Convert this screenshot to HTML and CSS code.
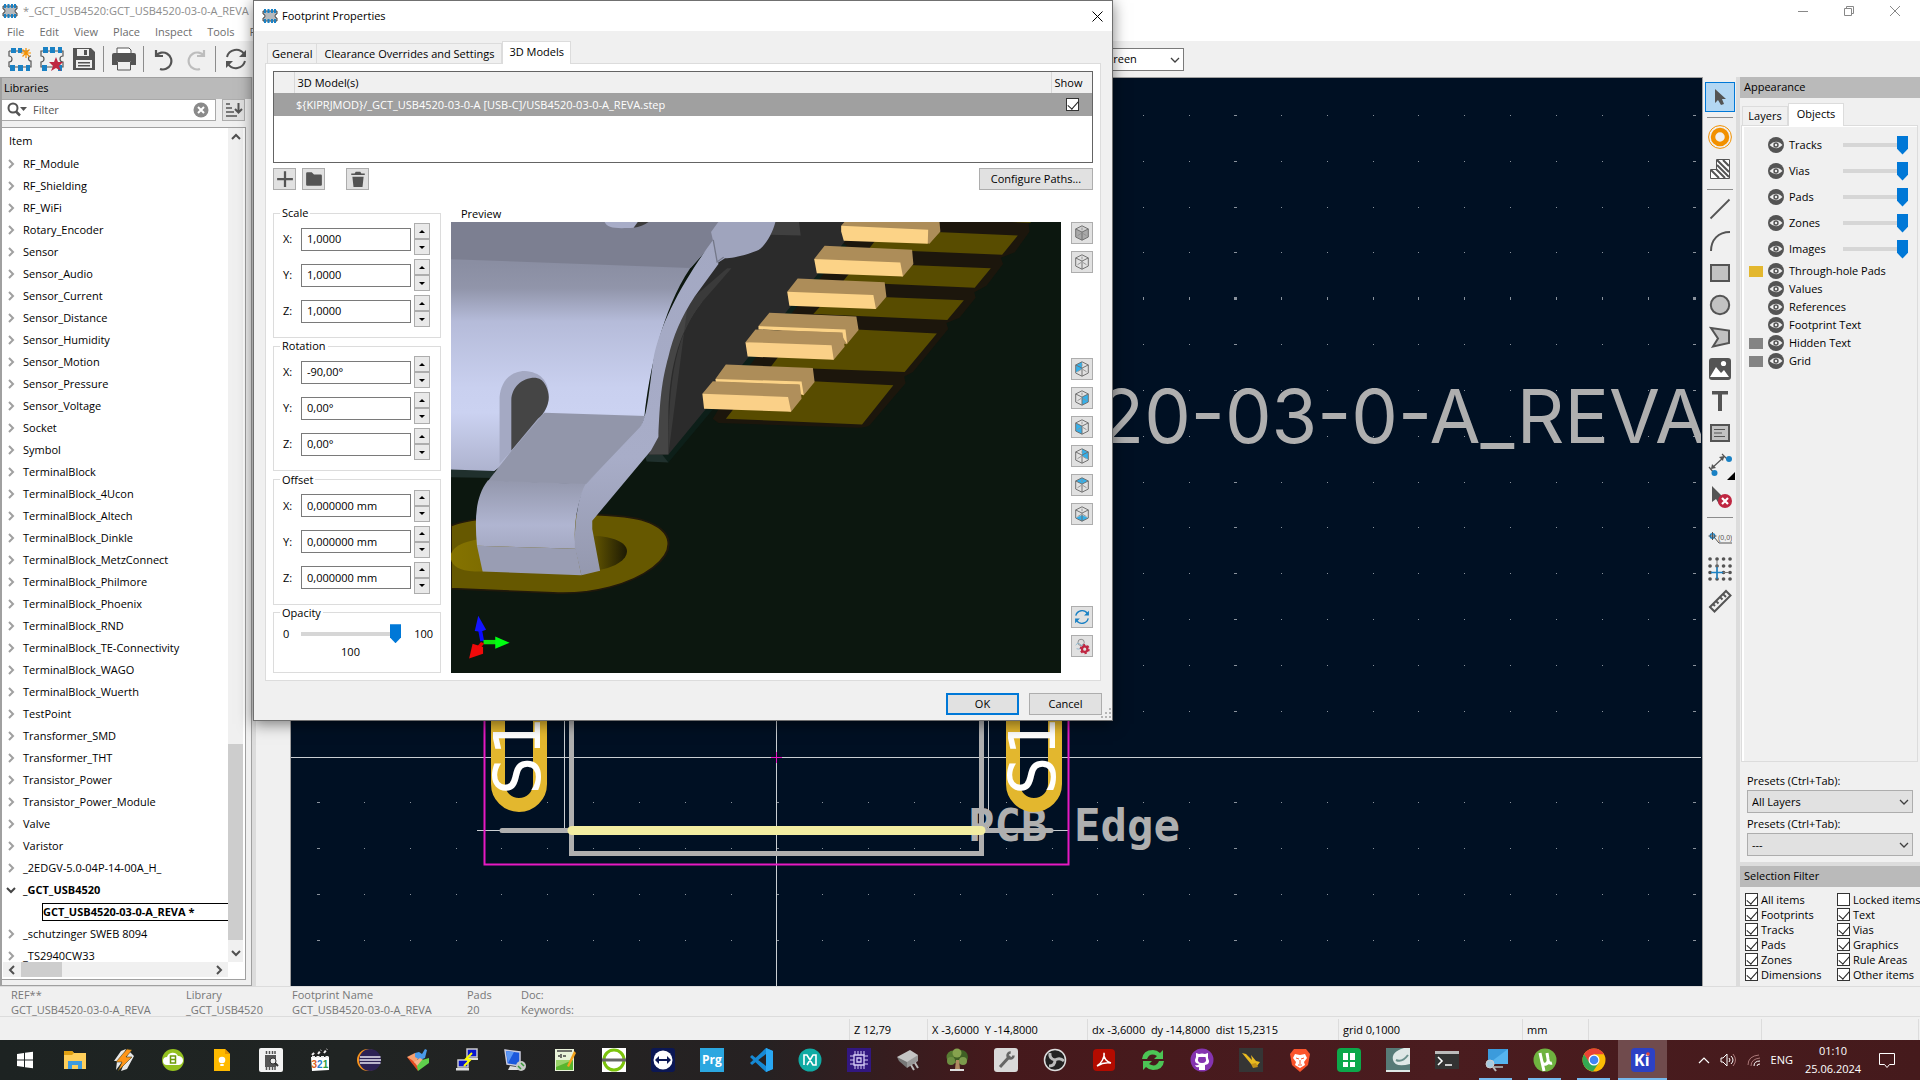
FILE: index.html
```html
<!DOCTYPE html>
<html lang="en">
<head>
<meta charset="utf-8">
<title>Footprint Editor</title>
<link rel="stylesheet" href="styles.css">
</head>
<body>
<svg class="defs" aria-hidden="true">
  <symbol id="eye" viewBox="0 0 16 16"><circle cx="8" cy="8" r="8" fill="#545454"/><path d="M1.500 8Q8 1.500 14.500 8Q8 14.500 1.500 8Z" fill="#efefef"/><circle cx="8" cy="8" r="2.700" fill="#545454"/><circle cx="8" cy="8" r="1.200" fill="#efefef"/></symbol>
  <symbol id="right" viewBox="0 0 8 10"><path d="M2 1l4 4-4 4" fill="none" stroke="#a0a0a0" stroke-width="2"/></symbol>
  <symbol id="down" viewBox="0 0 10 8"><path d="M1 2l4 4 4-4" fill="none" stroke="currentColor" stroke-width="2"/></symbol>
  <symbol id="thin-down" viewBox="0 0 10 8"><path d="M1 2l4 4 4-4" fill="none" stroke="#404040" stroke-width="1.300"/></symbol>
  <symbol id="cube" viewBox="0 0 20 20"><path d="M10 2l7 3.500v9L10 18l-7-3.500v-9ZM3 5.500l7 3.500 7-3.500M10 9v9" fill="none" stroke="#707070" stroke-width="1.100"/><path d="M10 4v3M5 13l4-2.500M15 13l-4-2.500" stroke="#909090" fill="none"/></symbol>
  <symbol id="chip" viewBox="0 0 16 16"><path d="M1 3h14v3a2 2 0 0 0 0 4v3H1v-3a2 2 0 0 0 0-4Z" fill="#b5b9bd" stroke="#444"/><path d="M3 1v4M6.500 1v4M10 1v4M13 1v4M3 11v4M6.500 11v4M10 11v4M13 11v4" stroke="#1a81c4" stroke-width="2"/></symbol>
  <symbol id="refresh" viewBox="0 0 24 24"><path d="M3 10A9.500 9.500 0 0 1 20 7M21 14A9.500 9.500 0 0 1 4 17" fill="none" stroke="currentColor" stroke-width="2"/><path d="M22 3v7h-7ZM2 21v-7h7Z" fill="currentColor"/></symbol>
</svg>

<div class="window">
  <header class="titlebar">
    <svg class="app-icon"><use href="#chip"/></svg>
    <h1>*_GCT_USB4520:GCT_USB4520-03-0-A_REVA</h1>
    <div class="window-buttons">
      <button aria-label="Minimize"><svg width="10" height="10"><path d="M0 5.500h10" stroke="#888"/></svg></button>
      <button aria-label="Restore"><svg width="10" height="10"><path d="M.5 2.500h7v7h-7ZM2.500 2V.5h7v7H8" fill="none" stroke="#888"/></svg></button>
      <button aria-label="Close"><svg width="10" height="10"><path d="M0 0l10 10M10 0L0 10" stroke="#888"/></svg></button>
    </div>
  </header>
  <nav class="menubar"><a href="#">File</a><a href="#">Edit</a><a href="#">View</a><a href="#">Place</a><a href="#">Inspect</a><a href="#">Tools</a><a href="#">Preferences</a></nav>
  <div class="toolbar">
    <button aria-label="New footprint"><svg viewBox="0 0 24 24"><path d="M1 4h19M1 20h22v-6a2 2 0 0 1 0-5M1 4v5a3 3 0 0 1 0 6v5" fill="none" stroke="#555" stroke-width="1.200"/><path d="M3 1h5v5H3ZM10 1h4v5h-4ZM2 18h5v6H2ZM10 18h5v6h-5ZM18 18h4v6h-4Z" fill="#1a81c4"/><path d="M18 1v10M13 6h10M14.500 2.500l7 7M21.500 2.500l-7 7" stroke="#f29100" stroke-width="1.200"/></svg></button>
    <button aria-label="New footprint with wizard"><svg viewBox="0 0 24 24"><path d="M1 4h22v5a3 3 0 0 0 0 6v5H1v-5a3 3 0 0 0 0-6Z" fill="none" stroke="#555" stroke-width="1.200"/><path d="M3 0h5v6H3ZM10 0h5v6h-5ZM18 0h4v6h-4ZM2 18h5v6H2ZM18 18h4v6h-4Z" fill="#1a81c4"/><path d="M16 10l2 5h5l-4 4 2 5-5-3-5 3 2-5-4-4h5Z" fill="#bf2641"/></svg></button>
    <button aria-label="Save"><svg viewBox="0 0 24 24"><path d="M1 1h18l4 4v18H1Z" fill="#545454"/><path d="M5 2h12v7H5ZM4 13h16v8H4Z" fill="#efefef"/><path d="M12 3h3v5h-3ZM6 15h12v1.500H6ZM6 18h12v1.500H6Z" fill="#545454"/></svg></button>
    <i></i>
    <button aria-label="Print"><svg viewBox="0 0 24 24"><path d="M5 6V1h12l2 2v3" fill="#fff" stroke="#545454"/><path d="M0 8q0-2 2-2h20q2 0 2 2v10h-5v-4H5v4H0Z" fill="#545454"/><path d="M5.500 14.500h13V23h-13Z" fill="#efefef" stroke="#545454"/></svg></button>
    <i></i>
    <button aria-label="Undo"><svg viewBox="0 0 24 24"><path d="M4 3v6h7M4 9a8.500 8.500 0 1 1 4 13" fill="none" stroke="#545454" stroke-width="2.200"/></svg></button>
    <button aria-label="Redo"><svg viewBox="0 0 24 24"><path d="M20 3v6h-7M20 9a8.500 8.500 0 1 0-4 13" fill="none" stroke="#bdbdbd" stroke-width="2.200"/></svg></button>
    <i></i>
    <button class="dark" aria-label="Refresh"><svg><use href="#refresh"/></svg></button>
    <span class="combo zoom"><select aria-label="Zoom"><option>Zoom to Screen</option></select><svg><use href="#thin-down"/></svg></span>
  </div>

  <main class="work">
    <aside class="libraries">
      <h2>Libraries</h2>
      <div class="search">
        <div class="search-box">
          <svg width="20" height="16" viewBox="0 0 20 16"><circle cx="6" cy="6" r="4.500" fill="none" stroke="#545454" stroke-width="2"/><path d="M9 9.500l4 4" stroke="#545454" stroke-width="2.500"/><path d="M13 5h7l-3.500 4Z" fill="#545454"/></svg>
          <input type="text" placeholder="Filter" aria-label="Filter">
          <svg width="16" height="16" viewBox="0 0 16 16"><circle cx="8" cy="8" r="7.500" fill="#8a8a8a"/><path d="M5 5l6 6M11 5l-6 6" stroke="#fff" stroke-width="2"/></svg>
        </div>
        <button class="square" aria-label="Sort"><svg viewBox="0 0 18 16"><path d="M1 2h4M1 6h6M1 10h8M1 14h11" stroke="#545454" stroke-width="1.600"/><path d="M13.500 1v9M10 7l3.500 3.500L17 7" fill="none" stroke="#545454" stroke-width="2"/></svg></button>
      </div>
      <div class="tree">
        <div class="tree-view">
          <h3>Item</h3>
          <ul>
            <li><svg><use href="#right"/></svg>RF_Module</li>
            <li><svg><use href="#right"/></svg>RF_Shielding</li>
            <li><svg><use href="#right"/></svg>RF_WiFi</li>
            <li><svg><use href="#right"/></svg>Rotary_Encoder</li>
            <li><svg><use href="#right"/></svg>Sensor</li>
            <li><svg><use href="#right"/></svg>Sensor_Audio</li>
            <li><svg><use href="#right"/></svg>Sensor_Current</li>
            <li><svg><use href="#right"/></svg>Sensor_Distance</li>
            <li><svg><use href="#right"/></svg>Sensor_Humidity</li>
            <li><svg><use href="#right"/></svg>Sensor_Motion</li>
            <li><svg><use href="#right"/></svg>Sensor_Pressure</li>
            <li><svg><use href="#right"/></svg>Sensor_Voltage</li>
            <li><svg><use href="#right"/></svg>Socket</li>
            <li><svg><use href="#right"/></svg>Symbol</li>
            <li><svg><use href="#right"/></svg>TerminalBlock</li>
            <li><svg><use href="#right"/></svg>TerminalBlock_4Ucon</li>
            <li><svg><use href="#right"/></svg>TerminalBlock_Altech</li>
            <li><svg><use href="#right"/></svg>TerminalBlock_Dinkle</li>
            <li><svg><use href="#right"/></svg>TerminalBlock_MetzConnect</li>
            <li><svg><use href="#right"/></svg>TerminalBlock_Philmore</li>
            <li><svg><use href="#right"/></svg>TerminalBlock_Phoenix</li>
            <li><svg><use href="#right"/></svg>TerminalBlock_RND</li>
            <li><svg><use href="#right"/></svg>TerminalBlock_TE-Connectivity</li>
            <li><svg><use href="#right"/></svg>TerminalBlock_WAGO</li>
            <li><svg><use href="#right"/></svg>TerminalBlock_Wuerth</li>
            <li><svg><use href="#right"/></svg>TestPoint</li>
            <li><svg><use href="#right"/></svg>Transformer_SMD</li>
            <li><svg><use href="#right"/></svg>Transformer_THT</li>
            <li><svg><use href="#right"/></svg>Transistor_Power</li>
            <li><svg><use href="#right"/></svg>Transistor_Power_Module</li>
            <li><svg><use href="#right"/></svg>Valve</li>
            <li><svg><use href="#right"/></svg>Varistor</li>
            <li><svg><use href="#right"/></svg>_2EDGV-5.0-04P-14-00A_H_</li>
            <li class="open"><svg><use href="#down"/></svg>_GCT_USB4520</li>
            <li class="leaf"><span>GCT_USB4520-03-0-A_REVA *</span></li>
            <li><svg><use href="#right"/></svg>_schutzinger SWEB 8094</li>
            <li><svg><use href="#right"/></svg>_TS2940CW33</li>
          </ul>
        </div>
        <div class="vscroll"><svg class="up"><use href="#down"/></svg><b></b><svg><use href="#down"/></svg></div>
        <div class="hscroll"><svg class="left"><use href="#down"/></svg><b></b><svg class="rightward"><use href="#down"/></svg></div>
      </div>
    </aside>
    <div class="sash"></div>
    <div class="left-tools"></div>

    <div class="canvas">
      <svg viewBox="290 78 1411 908" preserveAspectRatio="xMinYMin slice">
        <rect x="290" y="78" width="1411" height="909" fill="#001023"/>
        <g fill="none" stroke="#8a929c" shape-rendering="crispEdges">
          <path stroke-dasharray="1 44.850" d="M318 115.500H1701M318 161.500H1701M318 207.500H1701M318 252.500H1701M318 344.500H1701M318 390.500H1701M318 436.500H1701M318 482.500H1701M318 527.500H1701M318 573.500H1701M318 619.500H1701M318 665.500H1701M318 711.500H1701M318 802.500H1701M318 848.500H1701M318 894.500H1701M318 940.500H1701"/>
          <path stroke-dasharray="3 455.500" d="M317 115.500H1701M317 161.500H1701M317 207.500H1701M317 252.500H1701M317 344.500H1701M317 390.500H1701M317 436.500H1701M317 482.500H1701M317 527.500H1701M317 573.500H1701M317 619.500H1701M317 665.500H1701M317 711.500H1701M317 802.500H1701M317 848.500H1701M317 894.500H1701M317 940.500H1701"/>
          <path stroke-width="3" stroke-dasharray="1 44.850" d="M318 298.500H1701"/>
          <path stroke-width="3" stroke-dasharray="3 455.500" d="M317 298.500H1701"/>
        </g>
        <path d="M290 757.500H1701M776.500 78V987" stroke="#c9ced2"/>
        <text x="1706" y="443" text-anchor="end" class="silk">GCT_USB4520-03-0-A_REVA</text>
        <path d="M564.500 700V830M988.500 700V830M477 830.500H1069" stroke="#c9ced2"/>
        <path d="M571.500 700V853.500H981.500V700" fill="none" stroke="#afafaf" stroke-width="5"/>
        <path d="M502 830.500H1051" stroke="#afafaf" stroke-width="5" stroke-linecap="round"/>
        <text x="968" y="841" class="fab">PCB Edge</text>
        <path d="M572 830.500H981" stroke="#f2eda1" stroke-width="9" stroke-linecap="round"/>
        <path d="M498 690V784a21 21 0 0 0 42 0V690M1013 690V784a21 21 0 0 0 42 0V690" fill="none" stroke="#e3b72e" stroke-width="14"/>
        <text transform="translate(540 795) rotate(-90)" class="pad">S1</text>
        <text transform="translate(1055 795) rotate(-90)" class="pad">S1</text>
        <path d="M484.500 700V864.500H1068.500V700" fill="none" stroke="#e619c3" stroke-width="2"/>
        <path d="M771 757.500h11M776.500 752v11" stroke="#e619c3"/>
      </svg>
    </div>

    <div class="tools">
      <button class="on" aria-label="Select"><svg viewBox="0 0 24 24"><path d="M7 4v14l3-3 3 5 3-1-2-5h4Z" fill="#545454"/></svg></button>
      <i></i>
      <button aria-label="Add pad"><svg viewBox="0 0 24 24"><circle cx="12" cy="12" r="11.400" fill="none" stroke="#f29100"/><circle cx="12" cy="12" r="7" fill="none" stroke="#f29100" stroke-width="4.500"/></svg></button>
      <button aria-label="Rule area"><svg viewBox="0 0 24 24"><path d="M8.500 2.500h13v19h-19v-9h6Z" fill="#fff" stroke="#545454"/><path d="M9 3l12 12M9 8l12 12M15 3l6 6M8 12l9 9M3 13l8 8" stroke="#545454" stroke-width="2"/></svg></button>
      <i></i>
      <button aria-label="Line"><svg viewBox="0 0 24 24"><path d="M2.500 21.500l19-19" stroke="#545454" stroke-width="1.800"/></svg></button>
      <button aria-label="Arc"><svg viewBox="0 0 24 24"><path d="M3 22C3 11 10 3 22 3" fill="none" stroke="#545454" stroke-width="2"/></svg></button>
      <button aria-label="Rectangle"><svg viewBox="0 0 24 24"><path d="M3 4h18v16H3Z" fill="#c2c2c2" stroke="#545454" stroke-width="2"/></svg></button>
      <button aria-label="Circle"><svg viewBox="0 0 24 24"><circle cx="12" cy="12" r="9.200" fill="#c2c2c2" stroke="#545454" stroke-width="2"/></svg></button>
      <button aria-label="Polygon"><svg viewBox="0 0 24 24"><path d="M3 3l18 2.500V18L5 21.500l5-8Z" fill="#c2c2c2" stroke="#545454" stroke-width="2"/></svg></button>
      <button aria-label="Image"><svg viewBox="0 0 24 24"><rect x="1" y="1" width="22" height="22" rx="3" fill="#545454"/><path d="M2 20l6-10 5 6 3-3 5 7Z" fill="#fff"/><circle cx="15.500" cy="6.500" r="2.600" fill="#fff"/></svg></button>
      <button aria-label="Text"><svg viewBox="0 0 24 24"><path d="M4 2h16v3.500h-6V22h-4V5.500H4Z" fill="#545454"/></svg></button>
      <button aria-label="Text box"><svg viewBox="0 0 24 24"><path d="M3 4h18v16H3Z" fill="#c2c2c2" stroke="#545454" stroke-width="2"/><path d="M6 8.500h11M6 12h8M6 15.500h11" stroke="#545454"/></svg></button>
      <button class="more" aria-label="Dimension"><svg viewBox="0 0 24 24"><path d="M1 14l5 6M14 1l6 6M4 15L16 4" stroke="#545454" stroke-width="1.200"/><path d="M3 16l1-5 4 4ZM16 3l-1 5-4-4Z" fill="#545454"/><circle cx="6.500" cy="20" r="3" fill="#1a81c4"/><circle cx="21" cy="6" r="3" fill="#1a81c4"/></svg></button>
      <button aria-label="Delete"><svg viewBox="0 0 24 24"><path d="M4 1v16l4-3 3 5 4-6-2-3Z" fill="#545454"/><circle cx="17" cy="16" r="7" fill="#bf2641"/><path d="M14 13l6 6M20 13l-6 6" stroke="#fff" stroke-width="2.200"/></svg></button>
      <i></i>
      <button aria-label="Set origin"><svg viewBox="0 0 24 24"><circle cx="4.500" cy="11" r="2.200" fill="none" stroke="#1a81c4" stroke-width="1.500"/><path d="M4.500 7v8M.5 11h8M6 12l5 6h13" fill="none" stroke="#545454"/><text x="10" y="15" font-size="7" font-family="Liberation Sans, sans-serif" fill="#545454">(0,0)</text></svg></button>
      <button aria-label="Grid origin"><svg viewBox="0 0 24 24"><path d="M2 2h.1M9 2h.1M15.500 2h.1M22 2h.1M2 9h.1M9 9h.1M15.500 9h.1M22 9h.1M2 15.500h.1M15.500 15.500h.1M22 15.500h.1M2 22h.1M9 22h.1M15.500 22h.1M22 22h.1" stroke="#545454" stroke-width="3.600" stroke-linecap="round"/><path d="M9 3v18M3 15.500h18" stroke="#777"/><path d="M9 10v12M3 15.500h12" stroke="#1a81c4" stroke-width="1.500"/></svg></button>
      <button aria-label="Measure"><svg viewBox="0 0 24 24"><path d="M2 18L18 2l4.500 4.500L6.500 22.500ZM8 12l2.500 2.500M12 8l2.500 2.500M5 15l2 2M15 5l3 3" fill="none" stroke="#545454" stroke-width="2"/></svg></button>
    </div>
    <div class="sash"></div>

    <aside class="appearance">
      <h2>Appearance</h2>
      <div class="tabs"><button>Layers</button><button class="current">Objects</button></div>
      <div class="objects">
        <div class="object tall"><span></span><svg><use href="#eye"/></svg><label for="o1">Tracks</label><input id="o1" type="range" value="100"></div>
        <div class="object tall"><span></span><svg><use href="#eye"/></svg><label for="o2">Vias</label><input id="o2" type="range" value="100"></div>
        <div class="object tall"><span></span><svg><use href="#eye"/></svg><label for="o3">Pads</label><input id="o3" type="range" value="100"></div>
        <div class="object tall"><span></span><svg><use href="#eye"/></svg><label for="o4">Zones</label><input id="o4" type="range" value="100"></div>
        <div class="object tall"><span></span><svg><use href="#eye"/></svg><label for="o5">Images</label><input id="o5" type="range" value="100"></div>
        <div class="object"><span class="gold"></span><svg><use href="#eye"/></svg><p>Through-hole Pads</p></div>
        <div class="object"><span></span><svg><use href="#eye"/></svg><p>Values</p></div>
        <div class="object"><span></span><svg><use href="#eye"/></svg><p>References</p></div>
        <div class="object"><span></span><svg><use href="#eye"/></svg><p>Footprint Text</p></div>
        <div class="object"><span class="gray"></span><svg><use href="#eye"/></svg><p>Hidden Text</p></div>
        <div class="object"><span class="gray"></span><svg><use href="#eye"/></svg><p>Grid</p></div>
      </div>
      <div class="presets">
        <label for="p1">Presets (Ctrl+Tab):</label>
        <span class="combo"><select id="p1"><option>All Layers</option></select><svg><use href="#thin-down"/></svg></span>
        <label for="p2">Presets (Ctrl+Tab):</label>
        <span class="combo"><select id="p2"><option>---</option></select><svg><use href="#thin-down"/></svg></span>
      </div>
      <h2>Selection Filter</h2>
      <div class="filter">
        <label><input type="checkbox" checked>All items</label><label><input type="checkbox">Locked items</label>
        <label><input type="checkbox" checked>Footprints</label><label><input type="checkbox" checked>Text</label>
        <label><input type="checkbox" checked>Tracks</label><label><input type="checkbox" checked>Vias</label>
        <label><input type="checkbox" checked>Pads</label><label><input type="checkbox" checked>Graphics</label>
        <label><input type="checkbox" checked>Zones</label><label><input type="checkbox" checked>Rule Areas</label>
        <label><input type="checkbox" checked>Dimensions</label><label><input type="checkbox" checked>Other items</label>
      </div>
    </aside>
  </main>

  <div class="info">
    <p>REF**<br>GCT_USB4520-03-0-A_REVA</p><p>Library<br>_GCT_USB4520</p><p>Footprint Name<br>GCT_USB4520-03-0-A_REVA</p><p>Pads<br>20</p><p>Doc:<br>Keywords:</p>
  </div>
  <div class="status"><span></span><span>Z 12,79</span><span>X -3,6000&nbsp; Y -14,8000</span><span>dx -3,6000&nbsp; dy -14,8000&nbsp; dist 15,2315</span><span>grid 0,1000</span><span>mm</span><span></span><span></span><span></span></div>
</div>

<section class="dialog" role="dialog" aria-label="Footprint Properties">
  <header><svg class="app-icon"><use href="#chip"/></svg><h2>Footprint Properties</h2><button aria-label="Close dialog"><svg width="11" height="11"><path d="M.5.5l10 10M10.500.5l-10 10" stroke="#000"/></svg></button></header>
  <div class="dialog-body">
    <div class="tabs"><button>General</button><button>Clearance Overrides and Settings</button><button class="current">3D Models</button></div>
    <div class="page">
      <div class="models">
        <table>
          <thead><tr><th></th><th>3D Model(s)</th><th>Show</th></tr></thead>
          <tbody><tr><td></td><td>${KIPRJMOD}/_GCT_USB4520-03-0-A [USB-C]/USB4520-03-0-A_REVA.step</td><td><input type="checkbox" aria-label="Show model" checked></td></tr></tbody>
        </table>
      </div>
      <div class="model-buttons">
        <button class="square" aria-label="Add"><svg viewBox="0 0 16 16"><path d="M8 1v14M1 8h14" stroke="#545454" stroke-width="2"/></svg></button>
        <button class="square" aria-label="Browse"><svg viewBox="0 0 16 16"><path d="M1 3q0-1 1-1h4l2 2h6q1 0 1 1v8q0 1-1 1H2q-1 0-1-1Z" fill="#545454"/></svg></button>
        <button class="square trash" aria-label="Delete"><svg viewBox="0 0 16 16"><path d="M2 3h3l1-1.500h4L11 3h3v1.500H2ZM3 6h10l-1 9H4Z" fill="#545454"/></svg></button>
        <button class="push paths">Configure Paths...</button>
      </div>
      <div class="lower">
        <div class="groups">
          <fieldset><legend>Scale</legend>
            <div class="field"><label for="sx">X:</label><input id="sx" type="text" value="1,0000"><span class="spin"><button aria-label="Up"></button><button aria-label="Down"></button></span></div>
            <div class="field"><label for="sy">Y:</label><input id="sy" type="text" value="1,0000"><span class="spin"><button aria-label="Up"></button><button aria-label="Down"></button></span></div>
            <div class="field"><label for="sz">Z:</label><input id="sz" type="text" value="1,0000"><span class="spin"><button aria-label="Up"></button><button aria-label="Down"></button></span></div>
          </fieldset>
          <fieldset><legend>Rotation</legend>
            <div class="field"><label for="rx">X:</label><input id="rx" type="text" value="-90,00°"><span class="spin"><button aria-label="Up"></button><button aria-label="Down"></button></span></div>
            <div class="field"><label for="ry">Y:</label><input id="ry" type="text" value="0,00°"><span class="spin"><button aria-label="Up"></button><button aria-label="Down"></button></span></div>
            <div class="field"><label for="rz">Z:</label><input id="rz" type="text" value="0,00°"><span class="spin"><button aria-label="Up"></button><button aria-label="Down"></button></span></div>
          </fieldset>
          <fieldset><legend>Offset</legend>
            <div class="field"><label for="ox">X:</label><input id="ox" type="text" value="0,000000 mm"><span class="spin"><button aria-label="Up"></button><button aria-label="Down"></button></span></div>
            <div class="field"><label for="oy">Y:</label><input id="oy" type="text" value="0,000000 mm"><span class="spin"><button aria-label="Up"></button><button aria-label="Down"></button></span></div>
            <div class="field"><label for="oz">Z:</label><input id="oz" type="text" value="0,000000 mm"><span class="spin"><button aria-label="Up"></button><button aria-label="Down"></button></span></div>
          </fieldset>
          <fieldset class="opacity"><legend>Opacity</legend>
            <div class="slide"><span>0</span><input type="range" value="100" aria-label="Opacity"><span>100</span></div>
            <output>100</output>
          </fieldset>
        </div>
        <div class="preview">
          <h3>Preview</h3>
          <svg viewBox="451 222 608 450" preserveAspectRatio="xMidYMid slice">
            <defs>
              <linearGradient id="shell" gradientUnits="userSpaceOnUse" x1="0" y1="190" x2="0" y2="810"><stop offset="0" stop-color="#8a8ea2"/><stop offset=".12" stop-color="#9195aa"/><stop offset=".28" stop-color="#b5bbd9"/><stop offset=".6" stop-color="#c9d0ef"/><stop offset=".72" stop-color="#cbd2f1"/><stop offset="1" stop-color="#aeb3cf"/></linearGradient>
              <linearGradient id="leg" x1="0" y1="0" x2="0" y2="1"><stop offset="0" stop-color="#9498ad"/><stop offset=".65" stop-color="#b0b5d1"/><stop offset="1" stop-color="#a5a9c3"/></linearGradient>
              <linearGradient id="hole"><stop offset="0" stop-color="#857300"/><stop offset=".8" stop-color="#665800"/><stop offset="1" stop-color="#1d1a04"/></linearGradient>
              <linearGradient id="flange" x1="0" y1="0" x2="0" y2="1"><stop offset="0" stop-color="#a3a8c2"/><stop offset=".4" stop-color="#a6abc6"/><stop offset=".65" stop-color="#a8adc8"/><stop offset="1" stop-color="#9498ae"/></linearGradient>
            </defs>
            <rect x="451" y="222" width="608" height="451" fill="#0c170f"/>
            <g transform="translate(440 200) scale(.4337 .3333)">
              <path d="M627 655l13 13 320 14q20 0 28-8l82-125-3-20 20-14 81-128-4-18 30-16 37-60-3-16 28-20 38-65-5-18 32-17 34-62-3-33H900Z" fill="#1c160c"/>
              <path d="M657 655l73-120 312 20-72 117ZM760 500l70-120 312 20-74 115ZM858 342l40-57 306 16-38 59ZM925 246l35-57 306 16-37 58ZM985 148l35-58 308 17-36 58ZM1300 66h60l-4 3Z" fill="#584c00"/>
              <path d="M25 800l100 10v22l-100-2ZM470 760l55 2v24l-50-3Z" fill="#20302d"/>
              <path d="M525 786l180-280 230-370-60-40-380 640Z" fill="#0d1f19"/>
              <path d="M630 66h300v60L710 470 525 762h-60Z" fill="#2b2b2b"/>
              <path d="M765 66h60l4 41-70-2Z" fill="#404040"/>
              <path d="M480 762h45V660C525 520 545 400 602 307v-10h-30C530 400 500 550 502 700Z" fill="#454545"/>
              <path d="M570 307l90-102h10l-68 102C545 400 525 520 525 762Z" fill="#3a3a3a"/>
              <g fill="#ad8d59"><path d="M930 66h218l2 29-25 37-203-54ZM884 138l201 12 3 42-24 38-204-53ZM822 236l200 11 4 43-24 37-204-52ZM757 338l200 11 5 41-27 42-203-54ZM657 493l200 10 4 42-25 40-203-49Z"/></g>
              <g fill="#fcd387"><path d="M922 78l200 12-1 42-193-9-6-28ZM860 177l198 11 6 42-198-10ZM798 275l198 10 6 42-199-10ZM732 378l200 10 4 44-10-20-6-14-188-10ZM633 536l198 8 5 41-8-5-4-27-190-8Z"/></g>
              <path d="M725 388l200 9 5 43-25 39-203-53ZM627 543l200 10 4 42-24 39-204-54Z" fill="#b08f5b"/>
              <path d="M702 426l198 9 5 44-198-10ZM603 580l197 10 7 44-200-9Z" fill="#fad088"/>
              <path d="M25 975C100 935 400 928 470 960C540 990 540 1050 490 1100C440 1150 350 1182 260 1176L25 1163Z" fill="#665800" stroke="#21190b" stroke-width="5"/>
              <path d="M25 1060C40 1010 120 1000 360 1006C420 1012 440 1040 425 1070C410 1095 380 1105 360 1108L80 1112C40 1110 25 1090 25 1070Z" fill="url(#hole)"/>
              <path d="M25 66H640L630 125 575 205C510 330 480 520 470 647L240 700 125 811 25 807Z" fill="url(#shell)"/>
              <path d="M25 66H640L630 125 576 204 25 178Z" fill="#7c7f91"/>
              <path d="M137 790V590C140 540 165 512 195 512C230 515 250 540 250 590C250 610 240 640 230 655L165 750Z" fill="#a4a9c3"/>
              <path d="M164 750V600C165 560 190 530 222 533C240 535 250 570 250 590C250 615 240 640 225 655Z" fill="#454545"/>
              <path d="M240 637l232 10-12 40L335 852l-225-10 55-92Z" fill="#9296aa"/>
              <path d="M110 840l227 10C315 900 305 980 312 1044L85 1035C80 960 80 890 110 840Z" fill="url(#leg)"/>
              <path d="M85 1035l227 9 13 79-227-11Z" fill="#999db3"/>
              <path d="M628 120l12 72-55 98C555 350 535 410 525 470 510 540 505 600 502 710L485 750 350 960v25l18 125-43 13L310 1040C308 960 320 880 335 850L460 680C475 650 478 600 490 480C505 370 560 240 628 120Z" fill="url(#flange)"/>
              <path d="M640 66H771C765 100 745 145 728 153C700 168 670 175 655 175L637 190 628 125 623 97Z" fill="#9fa4bd"/>
              <path d="M628 120l9 66 15-14" fill="none" stroke="#747889" stroke-width="3"/>
              <path d="M378 66C385 85 400 87 445 84L465 66Z" fill="#a8adc8"/><path d="M455 66h25q-15 15-35 18Z" fill="#3c3c3c"/>
              <path d="M97 1320L92 1285" stroke="#0a0aff" stroke-width="9"/><path d="M80 1290l8-46 18 42q-12 8-26 4Z" fill="#1414ff"/>
              <path d="M100 1323h30" stroke="#0fe40f" stroke-width="13"/><path d="M127 1306l33 19-33 18Z" fill="#00ff12"/>
              <path d="M98 1325L85 1345" stroke="#e00" stroke-width="9"/><path d="M67 1372l8-44 24 10v20Z" fill="#f00a0a"/>
            </g>
          </svg>
        </div>
        <div class="views">
          <button class="square" aria-label="Perspective"><svg viewBox="0 0 20 20"><path d="M10 2l7 3.500v9L10 18l-7-3.500v-9Z" fill="#a9a9a9"/><path d="M3 5.500L10 2l7 3.500L10 9Z" fill="#d0d0d0"/><use href="#cube"/></svg></button>
          <button class="square" aria-label="Orthographic"><svg viewBox="0 0 20 20"><use href="#cube"/></svg></button>
          <button class="square first" aria-label="View left"><svg viewBox="0 0 20 20"><path d="M3 5.500L10 2v8l-7 4Z" fill="#35b0ea"/><use href="#cube"/></svg></button>
          <button class="square" aria-label="View right"><svg viewBox="0 0 20 20"><path d="M10 9l7-3.500v9L10 18Z" fill="#35b0ea"/><use href="#cube"/></svg></button>
          <button class="square" aria-label="View front"><svg viewBox="0 0 20 20"><path d="M3 5.500L10 9v9l-7-3.500Z" fill="#35b0ea"/><use href="#cube"/></svg></button>
          <button class="square" aria-label="View back"><svg viewBox="0 0 20 20"><path d="M10 2l7 3.500V14l-7-4Z" fill="#35b0ea"/><use href="#cube"/></svg></button>
          <button class="square" aria-label="View top"><svg viewBox="0 0 20 20"><path d="M3 5.500L10 2l7 3.500L10 9Z" fill="#35b0ea"/><use href="#cube"/></svg></button>
          <button class="square" aria-label="View bottom"><svg viewBox="0 0 20 20"><path d="M3 14.500L10 11l7 3.500L10 18Z" fill="#35b0ea"/><use href="#cube"/></svg></button>
          <button class="square reload" aria-label="Reload"><svg viewBox="-1 -1 26 26"><use href="#refresh" width="24" height="24"/></svg></button>
          <button class="square" aria-label="Preview options"><svg viewBox="0 0 20 20"><circle cx="9" cy="6" r="3.500" fill="#ddd" stroke="#888"/><path d="M3 9q3-4 6 0t6 0M4 13q5 2 7-5" fill="none" stroke="#8ab6cc"/><circle cx="13" cy="13.500" r="3" fill="none" stroke="#bf2641" stroke-width="2.500"/><circle cx="13" cy="13.500" r="4.600" fill="none" stroke="#bf2641" stroke-width="2" stroke-dasharray="2.400 2.400"/></svg></button>
        </div>
      </div>
    </div>
    <footer><button class="push default">OK</button><button class="push">Cancel</button></footer>
  </div>
  <svg class="grip" width="12" height="12"><path d="M9 1h2M5 5h2M9 5h2M1 9h2M5 9h2M9 9h2" stroke="#b5b5b5" stroke-width="2"/></svg>
</section>

<footer class="taskbar">
  <button class="start" aria-label="Start"><svg viewBox="0 0 24 24"><path d="M4 6l7-1v6.500H4ZM12 4.800l8-1.100v7.800h-8ZM4 12.500h7V19l-7-1ZM12 12.500h8v7.800l-8-1.100Z" fill="#fff"/></svg></button>
  <button aria-label="Explorer"><svg viewBox="0 0 24 24"><path d="M1 3h8l2 2h12v16H1Z" fill="#ffcf5a"/><path d="M1 3h8l2 2-2 2H1Z" fill="#e0a012"/><path d="M5 21v-8h14v8h-4v-4H9v4Z" fill="#3f9be0"/></svg></button>
  <button aria-label="Winamp"><svg viewBox="0 0 24 24"><path d="M9 3l5-2-4 9h3l-9 12 1-9H2ZM17 3l5 5-7 13-6 2Z" fill="#e8e8e8"/><path d="M15 1L4 14h6L6 23 20 9h-6l6-7Z" fill="#ff9518" stroke="#442" stroke-width=".6"/></svg></button>
  <button aria-label="Backup"><svg viewBox="0 0 24 24"><circle cx="12" cy="12" r="11" fill="#93c01f"/><path d="M6 17a4 4 0 0 1 0-8 6 6 0 0 1 11-1 4.500 4.500 0 0 1 1 9Z" fill="#fff"/><path d="M9.500 8h5v7h-5ZM9.500 11.500h5" fill="none" stroke="#6c9a0a" stroke-width="1.500"/></svg></button>
  <button aria-label="Keep"><svg viewBox="0 0 24 24"><path d="M4 1h11l5 5v17H4Z" fill="#ffba00"/><path d="M15 1l5 5h-5Z" fill="#e59400"/><circle cx="12" cy="12" r="3.300" fill="#fff"/><path d="M10.300 16h3.400v2h-3.400Z" fill="#fff"/></svg></button>
  <button aria-label="Programmer"><svg viewBox="0 0 24 24"><rect width="24" height="24" rx="2" fill="#f3f3f3"/><path d="M6 7h11v12H6Z" fill="#555"/><path d="M7.500 3v3M10.500 3v3M13.500 3v3M16 3v3M7.500 19v3M10.500 19v3M13.500 19v3M16 19v3" stroke="#555" stroke-width="1.500"/><circle cx="14" cy="13" r="3" fill="#eee" stroke="#333"/><path d="M16 15l3 3" stroke="#333" stroke-width="2"/></svg></button>
  <button aria-label="Media player"><svg viewBox="0 0 24 24"><path d="M3 9h18v13L4 23Z" fill="#fff"/><path d="M2 5l18-4 1 3L3 9Z" fill="#222"/><path d="M4 7l3-3M10 6l3-4M16 5l3-4M4 9h17" stroke="#eee" stroke-width="2" stroke-dasharray="3 1.500"/><text x="3.500" y="20" font-size="10" font-weight="700" font-family="Liberation Sans, sans-serif"><tspan fill="#e06020">3</tspan><tspan fill="#267fd0">2</tspan><tspan fill="#2a9c40">1</tspan></text></svg></button>
  <button aria-label="Eclipse"><svg viewBox="0 0 24 24"><circle cx="11" cy="12" r="11" fill="#f7941e"/><circle cx="13" cy="12" r="11" fill="#2c2255"/><path d="M3 9h20.500M2.500 12h21.500M3 15h20.500" stroke="#e8e6f2" stroke-width="1.700"/></svg></button>
  <button aria-label="Modeler"><svg viewBox="0 0 24 24"><path d="M1 9l8-4 4 4-4 7Z" fill="#f5a070"/><path d="M1 9l5 3 7 7-1 4Z" fill="#e54a20"/><path d="M9 5l4-1 3 2 3-5 2 1-2 8-5 2-5-3Z" fill="#4a9ae8"/><path d="M8 14l6-4 5 3-7 6Z" fill="#f7b08a"/><path d="M16 12l7-2v5L12 23l-1-5Z" fill="#5fcf4c"/></svg></button>
  <button aria-label="PuTTY"><svg viewBox="0 0 24 24"><path d="M12 1h10v8H12ZM3 12h10v7H3Z" fill="#0a17cc" stroke="#ccc" stroke-width="1.500"/><path d="M12 10h11v2H12ZM1 20h13v2.500H1Z" fill="#ddd"/><path d="M17 5l-6 6 4 1-6 6" fill="none" stroke="#ff0" stroke-width="2"/></svg></button>
  <button aria-label="Remote desktop"><svg viewBox="0 0 24 24"><path d="M1 2l15 2v14L3 16Z" fill="#1c58dc" stroke="#ccd" stroke-width="1.500"/><path d="M2 3l8 1-6 11Z" fill="#5b97f5"/><path d="M6 18l8 1v3H4Z" fill="#ddd"/><circle cx="17" cy="18" r="5" fill="#c8cac8"/><path d="M14 18l3 3M17 15l3 3" stroke="#3a9a3a" stroke-width="1.500"/></svg></button>
  <button aria-label="Editor"><svg viewBox="0 0 24 24"><path d="M2 1h19v22H2Z" fill="#e9f3da"/><path d="M3 12h17v10H3Z" fill="#59b52e"/><path d="M3 12h17l-17 7Z" fill="#9ad46a"/><path d="M4 3h15M5 8h2M8 6v4M10 8h3" stroke="#444" stroke-width="1.500"/><path d="M21 3l-7 15 2 1 7-14Z" fill="#f4a21c"/></svg></button>
  <button aria-label="Serial tool"><svg viewBox="0 0 24 24"><path d="M0 0h24v24H0Z" fill="#fff"/><circle cx="12" cy="12" r="10" fill="#fff" stroke="#7cc40c" stroke-width="3"/><path d="M0 10.500h24v3H0Z" fill="#666"/></svg></button>
  <button aria-label="TeamViewer"><svg viewBox="0 0 24 24"><rect width="24" height="24" rx="3" fill="#0b1754"/><circle cx="12" cy="12" r="9.500" fill="#fff"/><path d="M4 12l4-4v3h8V8l4 4-4 4v-3H8v3Z" fill="#0b1754"/></svg></button>
  <button aria-label="Programmer"><svg viewBox="0 0 24 24"><path d="M0 0h24v24H0Z" fill="#2ba7e0"/><text x="2" y="16" font-size="12" font-weight="700" font-family="Open Sans, sans-serif" fill="#fff">Prg</text></svg></button>
  <button aria-label="Code"><svg viewBox="0 0 24 24"><path d="M17 0l7 3v18l-7 3L1 9l2-2 14 11V6L3 17l-2-2Z" fill="#1689d4"/><path d="M17 0l7 3v18l-7 3Z" fill="#29a7f2"/></svg></button>
  <button aria-label="MX"><svg viewBox="0 0 24 24"><circle cx="12" cy="12" r="11.500" fill="#10aba4"/><path d="M6 17V7h3l6 10h3V7h-3L9 17" fill="none" stroke="#fff" stroke-width="1.600"/></svg></button>
  <button aria-label="Chip tool"><svg viewBox="0 0 24 24"><path d="M0 0h24v24H0Z" fill="#321780"/><path d="M7 7h10v10H7ZM10 10h4v4h-4Z" fill="none" stroke="#d6cdf6" stroke-width="1.300"/><path d="M8 3v4M11 3v4M14 3v4M17 3v4M8 17v4M11 17v4M14 17v4M17 17v4M3 8h4M3 12h4M3 16h4M17 8h4M17 12h4M17 16h4" stroke="#d6cdf6"/></svg></button>
  <button aria-label="Component"><svg viewBox="0 0 24 24"><path d="M1 9l13-7 8 5-2 8-9 3Z" fill="#c4c4c4"/><path d="M1 9l10 5v6L3 13Z" fill="#777"/><path d="M11 14l11-7v6l-11 7Z" fill="#999"/><path d="M15 17l3 5M19 15l3 5" stroke="#bbb" stroke-width="2"/></svg></button>
  <button aria-label="Tree"><svg viewBox="0 0 24 24"><circle cx="8" cy="9" r="6.500" fill="#577b32"/><circle cx="16" cy="9" r="7" fill="#3f5f24"/><circle cx="12" cy="5" r="4.500" fill="#86a24e"/><circle cx="6" cy="13" r="4" fill="#6d8f42"/><circle cx="18" cy="13" r="4" fill="#7c9a4c"/><path d="M11 12h3l1 9h-5Z" fill="#b08a62"/><path d="M5 21h14v2H5Z" fill="#ddd"/></svg></button>
  <button aria-label="Wrench"><svg viewBox="0 0 24 24"><rect width="24" height="24" rx="3" fill="#d9d9d9"/><path d="M6 19L16 8" stroke="#666" stroke-width="3"/><circle cx="16.500" cy="7.500" r="3" fill="none" stroke="#666" stroke-width="2.500" stroke-dasharray="14 5"/></svg></button>
  <button aria-label="OBS"><svg viewBox="0 0 24 24"><circle cx="12" cy="12" r="10.500" fill="#222" stroke="#ddd" stroke-width="1.500"/><path d="M12 12q-6-1-5-7M12 12q5-3 9 1M12 12q0 6-6 6" fill="none" stroke="#bbb" stroke-width="3"/></svg></button>
  <button aria-label="Acrobat"><svg viewBox="0 0 24 24"><rect x="1" y="1" width="22" height="22" rx="4" fill="#b30b00"/><path d="M5 18C9 16 13 9 12 5c-1 5 3 9 7 10-5-1-9 0-14 3Z" fill="none" stroke="#fff" stroke-width="1.500"/></svg></button>
  <button aria-label="Sync"><svg viewBox="0 0 24 24"><path d="M1 11Q2 2 12 2q4 0 7 3l3-3v9h-9l3-3q-7-4-10 3ZM23 13q-1 9-11 9-4 0-7-3l-3 3v-9h9l-3 3q7 4 10-3Z" fill="#4cc455"/></svg></button>
  <button aria-label="GitHub"><svg viewBox="0 0 24 24"><circle cx="12" cy="12" r="11.500" fill="#8534b0"/><path d="M6 5l3 1q3-1 6 0l3-1v5q3 6-3 7v5H9v-3q-3 1-4-2 3 1 4-1-6-1-3-7Z" fill="#fff"/><path d="M8.500 9h7q2 6-3.500 6t-3.500-6Z" fill="#8534b0"/></svg></button>
  <button aria-label="Bee"><svg viewBox="0 0 24 24"><path d="M0 0h24v24H0Z" fill="#353535"/><path d="M3 5l4 1 6 6-1-5 5 6 4 1-3 4-6-2Z" fill="#e8b920"/><path d="M12 16l5-1 2 4-5 1Z" fill="#c49118"/></svg></button>
  <button aria-label="Brave"><svg viewBox="0 0 24 24"><path d="M6 1h12l4 5-2 11-8 7-8-7L2 6Z" fill="#fb542b"/><path d="M7 6l5 1 5-1 2 4-3 4 1 3-5 3-5-3 1-3-3-4Z" fill="#fff"/><path d="M8 10l3 1M16 10l-3 1M12 12v4M10 17h4" stroke="#fb542b"/></svg></button>
  <button aria-label="Window tool"><svg viewBox="0 0 24 24"><rect width="24" height="24" rx="4" fill="#0ca84a"/><path d="M6 5h5v7H6ZM13 5h5v7h-5ZM6 14h5v5H6ZM13 14h5v5h-5Z" fill="#fff"/></svg></button>
  <button aria-label="Image viewer"><svg viewBox="0 0 24 24"><path d="M0 0h24v24H0Z" fill="#dfe8e6"/><path d="M0 0h18Q5 4 7 12t17 4v6H0Z" fill="#577b77"/><path d="M10 12q6 3 12-5" fill="none" stroke="#6b908b" stroke-width="2"/></svg></button>
  <button aria-label="Terminal"><svg viewBox="0 0 24 24"><path d="M0 3h24v18H0Z" fill="#333"/><path d="M0 3h24v3H0Z" fill="#bbb"/><path d="M3 9l4 4-4 4M10 17h7" fill="none" stroke="#fff" stroke-width="1.600"/></svg></button>
  <button class="running" aria-label="Screen search"><svg viewBox="0 0 24 24"><path d="M4 1h20v15H4Z" fill="#3b9bdc"/><path d="M4 16L24 1v15Z" fill="#56b4ee"/><path d="M10 18h9v2h-9Z" fill="#999"/><circle cx="6" cy="16" r="4" fill="#a7cbe0" stroke="#ccc"/><path d="M9 19l3 4" stroke="#bbb" stroke-width="2"/></svg></button>
  <button class="running" aria-label="uTorrent"><svg viewBox="0 0 24 24"><circle cx="12" cy="12" r="11.500" fill="#6fb33f"/><path d="M7 5l2 9q1 3 4 2 3-1 2-5l-1-6M15 12q1 4 4 3M9 14l2 9" fill="none" stroke="#fff" stroke-width="3"/></svg></button>
  <button class="running" aria-label="Chrome"><svg viewBox="0 0 24 24"><circle cx="12" cy="12" r="11.500" fill="#fbbc05"/><path d="M2 6.300A11.500 11.500 0 0 1 22 6.300H12L7 15Z" fill="#ea4335"/><path d="M2 6.300A11.500 11.500 0 0 0 11 23.500l6-9-9 1Z" fill="#34a853"/><circle cx="12" cy="12" r="5.500" fill="#fff"/><circle cx="12" cy="12" r="4.300" fill="#4285f4"/></svg></button>
  <button class="running active" aria-label="KiCad"><svg viewBox="0 0 24 24"><rect width="24" height="24" rx="4" fill="#2c41c4"/><text x="3" y="18" font-size="16" font-weight="700" font-family="Open Sans, sans-serif" fill="#fff">Ki</text><circle cx="17" cy="6" r="1.800" fill="#e34a3a"/></svg></button>
  <div class="tray">
    <svg width="12" height="8"><path d="M1 7l5-5 5 5" fill="none" stroke="#fff" stroke-width="1.200"/></svg>
    <svg width="17" height="14"><path d="M1 5h2l4-4v12L3 9H1ZM9 5q2 2 0 4M11 3q4 4 0 8" fill="none" stroke="#fff"/><path d="M13 1q5 6 0 12" fill="none" stroke="#a77"/></svg>
    <svg width="14" height="14"><path d="M1 12Q1 3 12 2M4 13Q4 6 13 5" fill="none" stroke="#a77"/><path d="M7 13q0-5 6-5M10 13q0-2 3-2" fill="none" stroke="#fff"/></svg>
    <span>ENG</span>
    <time>01:10<br>25.06.2024</time>
    <svg width="16" height="16"><path d="M.5 1.500h15v11h-5l-2.500 3-2.500-3h-5Z" fill="none" stroke="#fff"/></svg>
  </div>
</footer>
</body>
</html>
```
FILE: styles.css
```css
* { box-sizing: border-box; margin: 0; padding: 0; }
body { height: 100vh; display: flex; flex-direction: column; overflow: hidden; background: #f0f0f0; color: #000; font: 11px/16px "Open Sans", "Noto Sans", sans-serif; }
button, input, select { font: inherit; color: inherit; }
button { display: flex; align-items: center; justify-content: center; border: 0; background: none; }
h1, h2, h3 { font: inherit; }
ul { list-style: none; }
.defs { display: none; }
.window { flex: 1; min-height: 0; display: flex; flex-direction: column; }

.titlebar { display: flex; align-items: center; gap: 5px; height: 22px; padding: 0 2px; background: #fff; color: #8c8c8c; }
.app-icon { width: 16px; height: 16px; }
.titlebar h1 { width: 228px; white-space: nowrap; }
.window-buttons { display: flex; margin-left: auto; }
.window-buttons button { width: 46px; height: 20px; }
.menubar { display: flex; align-items: center; gap: 15px; height: 19px; padding: 1px 0 0 7px; background: #fff; }
.menubar a { color: #6d6d6d; text-decoration: none; }
.toolbar { display: flex; align-items: center; height: 36px; padding-left: 4px; }
.toolbar button { width: 32px; height: 32px; }
.toolbar button svg { width: 24px; height: 24px; }
.toolbar .dark { color: #545454; }
.toolbar > i { width: 1px; height: 26px; margin: 0 4px 0 3px; background: #8c8c8c; }
.toolbar .zoom { width: 164px; margin-left: 768px; }

.work { flex: 1; min-height: 0; display: grid; grid-template-columns: 252px 4px 35px minmax(0, 1fr) 34px 4px 180px; }
.sash { background: #dcdcdc; }
.left-tools { border-right: 1px solid #a0a0a0; }
.work h2 { height: 21px; padding-left: 4px; line-height: 20px; background: #bababa; }

.libraries { display: flex; flex-direction: column; min-height: 0; border: 1px solid #a0a0a0; border-left-width: 2px; }
.libraries h2 { padding-left: 2px; }
.search { display: flex; gap: 6px; height: 22px; padding-right: 6px; }
.search-box { flex: 1; display: flex; align-items: center; gap: 4px; border: 1px solid #a9a9a9; border-left: 0; background: #fff; padding: 0 6px 0 5px; }
.search-box input { flex: 1; min-width: 0; border: 0; outline: 0; background: none; padding-left: 2px; }
.search-box input::placeholder { color: #545454; }
.square { flex: none; width: 23px; height: 22px; border: 1px solid #adadad; background: #e1e1e1; }
.tree { flex: 1; min-height: 0; display: grid; grid-template: minmax(0, 1fr) 15px / minmax(0, 1fr) 15px; margin: 6px 5px 5px 0; padding: 0 2px 2px 1px; border: 1px solid #a0a0a0; border-left: 0; background: #fff; }
.tree-view { overflow: hidden; }
.tree h3 { height: 25px; padding: 5px 0 0 6px; }
.tree li { display: flex; align-items: center; height: 22px; padding-left: 4px; white-space: nowrap; }
.tree li svg { width: 8px; height: 10px; margin-right: 8px; }
.tree .open, .tree .leaf { font-weight: 700; }
.tree .open svg { width: 10px; height: 8px; margin: 0 7px 0 -1px; color: #444; }
.tree .leaf { padding-left: 39px; }
.leaf span { flex: 1; border: 1px solid #000; border-right: 0; }
.vscroll, .hscroll { display: flex; align-items: center; justify-content: space-between; background: #f0f0f0; color: #505050; }
.vscroll { flex-direction: column; padding: 5px 0; }
.vscroll svg, .hscroll svg { width: 10px; height: 8px; }
.vscroll b { width: 15px; height: 196px; margin: auto 0 9px; background: #cdcdcd; }
.hscroll { padding: 0 4px; }
.hscroll b { width: 41px; height: 15px; margin: 0 auto 0 4px; background: #cdcdcd; }
.up { transform: rotate(180deg); }
.left { transform: rotate(90deg); }
.rightward { transform: rotate(-90deg); }

.canvas { min-width: 0; min-height: 0; border-top: 1px solid #a0a0a0; background: #001023; }
.canvas svg { display: block; width: 1411px; height: 908px; min-width: 100%; min-height: 100%; margin-left: -1px; }
.canvas { overflow: hidden; }
.silk { font: 74px Inter, sans-serif; fill: #afafaf; }
.fab { font: 700 44px "DejaVu Sans Mono", monospace; fill: #afafaf; }
.pad { font: 64px "DejaVu Sans Mono", monospace; fill: #fff; }

.tools { display: flex; flex-direction: column; align-items: center; gap: 2px; padding-top: 5px; border-left: 1px solid #a0a0a0; }
.tools button { position: relative; width: 30px; height: 30px; }
.tools button svg { width: 24px; height: 24px; }
.tools .on { border: 1px solid #0078d7; background: #b3d7f3; }
.tools i { width: 26px; height: 6px; border-bottom: 1px solid #8c8c8c; margin: -2px 0 2px; }
.tools .more::after { content: ""; position: absolute; right: 0; bottom: 0; border: 4px solid #000; border-left-color: transparent; border-top-color: transparent; }

.appearance { display: flex; flex-direction: column; min-height: 0; }
.tabs { display: flex; align-items: flex-end; }
.tabs button { height: 19px; border: 1px solid #dcdcdc; border-bottom: 0; background: #f0f0f0; }
.tabs button + button { border-left: 0; }
.tabs .current { height: 23px; margin-bottom: -1px; padding-bottom: 1px; border: 1px solid #dcdcdc; border-bottom: 0; background: #fff; z-index: 1; }
.appearance .tabs { height: 27px; padding-left: 2px; }
.appearance .tabs button { width: 46px; }
.appearance .tabs .current { width: 56px; padding-bottom: 3px; }
.objects { flex: 1; min-height: 0; margin: 0 2px 0 1px; padding: 5px 0; border: solid #fff; border-width: 2px 1px 1px 3px; outline: 1px solid #dcdcdc; outline-offset: -1px; }
.object { display: grid; grid-template-columns: 14px 16px 49px 65px; gap: 5px; align-items: center; height: 18px; padding-left: 5px; }
.object.tall { height: 26px; }
.object svg { width: 16px; height: 16px; }
.object p { white-space: nowrap; }
.object span { height: 11px; }
.gold { background: #e3b72e; }
.gray { background: #848484; }
input[type="range"] { appearance: none; height: 20px; min-width: 0; background: linear-gradient(#d6d6d6, #d6d6d6) center / 100% 4px no-repeat; }
input[type="range"]::-webkit-slider-thumb { appearance: none; width: 11px; height: 19px; background: #0078d7; clip-path: polygon(0 0, 100% 0, 100% 70%, 50% 100%, 0 70%); }

.presets { display: flex; flex-direction: column; height: 104px; padding: 11px 7px 0; border-bottom: 4px solid #dcdcdc; }
.presets label { height: 17px; }
.presets .combo { margin-bottom: 3px; }
.combo { position: relative; display: block; height: 23px; }
.combo select { appearance: none; width: 100%; height: 100%; padding: 0 4px; border: 1px solid #adadad; background: #e1e1e1; }
.combo svg { position: absolute; right: 4px; top: 8px; width: 10px; height: 8px; }
.combo.zoom select { background: #fff; border-color: #7a7a7a; padding-left: 35px; }
.filter { display: grid; grid-template-columns: 92px minmax(0, 1fr); grid-auto-rows: 15px; height: 99px; padding: 5px 0 0 5px; }
.filter label { display: flex; align-items: center; gap: 3px; white-space: nowrap; }
input[type="checkbox"] { appearance: none; flex: none; display: grid; place-items: center; width: 13px; height: 13px; border: 1px solid #333; background: #fff; }
input[type="checkbox"]:checked::after { content: ""; width: 9px; height: 5px; border: solid #222; border-width: 0 0 1px 1px; transform: translateY(-1px) rotate(-48deg); }

.info { display: flex; height: 31px; padding-left: 11px; border-top: 1px solid #dcdcdc; border-bottom: 1px solid #dcdcdc; color: #777; line-height: 15px; white-space: nowrap; }
.info p:nth-child(1) { width: 175px; }
.info p:nth-child(2) { width: 106px; }
.info p:nth-child(3) { width: 175px; }
.info p:nth-child(4) { width: 54px; }
.status { display: grid; grid-template-columns: minmax(0, 1fr) 78px 160px 251px 184px 66px 173px 157px 1px; height: 23px; padding-top: 2px; line-height: 21px; white-space: nowrap; }
.status span { padding-left: 4px; border-right: 1px solid #dcdcdc; }

.dialog { position: absolute; left: 253px; top: 0; width: 860px; border: 1px solid #707070; background: #f0f0f0; box-shadow: 0 3px 14px rgba(0, 0, 0, .5); }
.dialog header { display: flex; align-items: center; gap: 4px; height: 30px; padding: 0 9px 0 8px; background: #fff; }
.dialog header h2 { flex: 1; }
.dialog-body { padding: 10px 11px 5px; }
.dialog .tabs { padding-left: 2px; }
.dialog .tabs button { height: 20px; padding: 0 4px; }
.dialog .tabs button:nth-child(2) { padding: 0 7px; }
.dialog .tabs .current { height: 23px; padding: 0 6px 2px; }
.page { border: 1px solid #dcdcdc; background: #fff; padding: 7px; }
.models { height: 92px; border: 1px solid #646464; }
.models table { width: 100%; border-collapse: collapse; table-layout: fixed; }
.models th { height: 21px; font-weight: 400; text-align: left; padding-left: 3px; background: #f0f0f0; border-right: 1px solid #d8d8d8; }
.models th:first-child { width: 20px; }
.models th:last-child { width: 41px; border-right: 0; }
.models td { height: 23px; padding-left: 2px; background: #a0a0a0; color: #fff; }
.models td input { margin: 0 auto; }
.model-buttons { display: flex; gap: 6px; margin-top: 5px; }
.square svg { width: 18px; height: 18px; }
.model-buttons .trash { margin-left: 15px; }
.push { height: 22px; width: 73px; border: 1px solid #adadad; background: #e1e1e1; }
.push.default { border: 2px solid #0078d7; }
.paths { width: 114px; margin-left: auto; }
.lower { display: grid; grid-template-columns: 168px minmax(0, 1fr) 22px; column-gap: 10px; margin-top: 16px; }
.groups { display: grid; gap: 1px; }
fieldset { min-width: 0; height: 132px; padding: 3px 10px 0 9px; border: 1px solid #dcdcdc; }
legend { height: 14px; line-height: 14px; padding: 0 2px; margin-left: -3px; }
.field { display: grid; grid-template-columns: 15px 110px 16px; column-gap: 3px; align-items: center; height: 32px; margin-bottom: 4px; }
.field label { white-space: nowrap; }
.field input { width: 110px; height: 23px; border: 1px solid #7a7a7a; background: #fff; padding: 0 5px 1px; }
.spin { display: grid; }
.spin button { width: 16px; height: 16px; border: 1px solid #adadad; background: #e9e9e9; }
.spin button::after { content: ""; border: 3px solid transparent; border-bottom-color: #000; border-top: 0; }
.spin button + button::after { border-bottom: 0; border-top: 3px solid #000; }
.opacity { height: 67px; padding-top: 4px; }
.slide { display: grid; grid-template-columns: 12px 100px 22px; column-gap: 6px; align-items: center; height: 20px; }
.slide span:last-child { text-align: right; margin-right: -4px; }
.opacity output { display: block; margin-right: 12px; text-align: center; }
.preview { min-width: 0; }
.preview h3 { height: 16px; padding-left: 10px; }
.preview svg { display: block; width: 100%; height: 451px; }
.views { display: flex; flex-direction: column; gap: 7px; padding-top: 16px; }
.views .square { width: 22px; }
.views .first { margin-top: 78px; }
.views .reload { margin-top: 74px; color: #1a81c4; }
.dialog footer { display: flex; justify-content: flex-end; gap: 10px; padding: 12px 0 0; margin-right: -1px; }
.grip { position: absolute; right: 0; bottom: 0; }

.taskbar { display: flex; height: 40px; background: linear-gradient(90deg, #1d2322 0, #202423 18%, #262122 40%, #45191c 52%, #4a1c1f 75%, #451a1c 100%); color: #fff; }
.taskbar button { flex: none; width: 49px; height: 40px; border-bottom: 2px solid transparent; padding-top: 2px; background-clip: padding-box; }
.taskbar button svg { width: 24px; height: 24px; }
.taskbar .start { width: 50px; }
.taskbar .running { border: solid transparent; border-width: 0 4px 2px; border-image: linear-gradient(90deg, transparent 9%, #76b9ed 9%, #76b9ed 91%, transparent 91%) 0 0 2; }
.taskbar .active { border: 0; border-bottom: 2px solid #76b9ed; background: #704b4d; }
.tray { display: flex; align-items: center; gap: 10px; margin-left: auto; padding-right: 25px; }
.tray time { width: 60px; text-align: center; line-height: 18px; }
.tray time + svg { margin-left: 6px; }
```
